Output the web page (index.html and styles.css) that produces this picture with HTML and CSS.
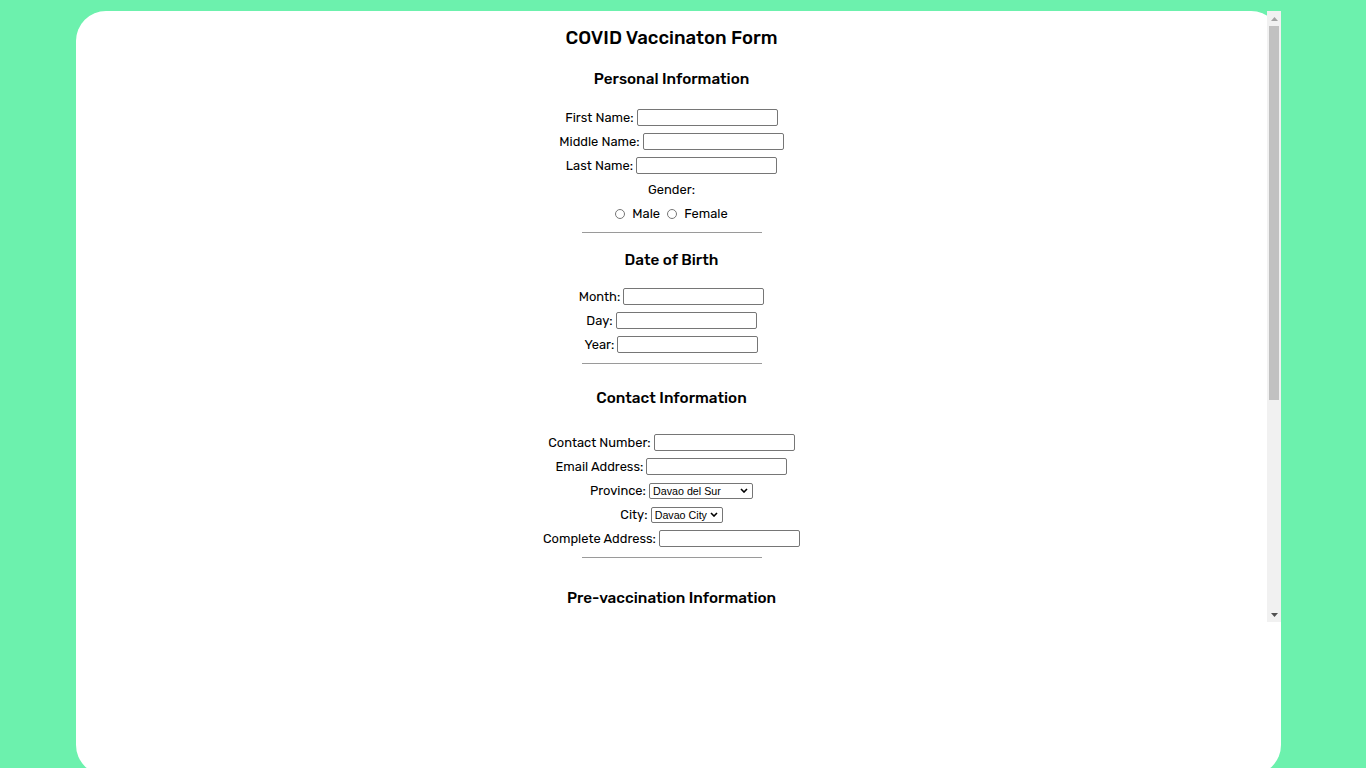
FILE: index.html
```html
<!DOCTYPE html>
<html lang="en">
<head>
<meta charset="utf-8">
<title>COVID Vaccinaton Form</title>
<link rel="stylesheet" href="styles.css">
</head>
<body>
<div class="card">
  <div class="viewport">
    <div class="scroller">
      <form class="form">
        <h1 class="title">COVID Vaccinaton Form</h1>

        <h2 class="section-title sec-personal">Personal Information</h2>
        <div class="row"><label>First Name:</label> <input type="text" class="field"></div>
        <div class="row"><label>Middle Name:</label> <input type="text" class="field"></div>
        <div class="row"><label>Last Name:</label> <input type="text" class="field"></div>
        <div class="row"><label>Gender:</label></div>
        <div class="row radios">
          <input type="radio" name="gender" class="radio"><span>Male</span>
          <input type="radio" name="gender" class="radio"><span>Female</span>
        </div>
        <hr class="divider">

        <h2 class="section-title sec-birth">Date of Birth</h2>
        <div class="row"><label>Month:</label> <input type="text" class="field"></div>
        <div class="row"><label>Day:</label> <input type="text" class="field"></div>
        <div class="row"><label>Year:</label> <input type="text" class="field"></div>
        <hr class="divider">

        <h2 class="section-title sec-contact">Contact Information</h2>
        <div class="row"><label>Contact Number:</label> <input type="text" class="field"></div>
        <div class="row"><label>Email Address:</label> <input type="text" class="field"></div>
        <div class="row"><label>Province:</label> <select class="select select-province"><option>Davao del Sur</option><option>Davao del Norte</option></select></div>
        <div class="row"><label>City:</label> <select class="select select-city"><option>Davao City</option><option>Digos City</option></select></div>
        <div class="row"><label>Complete Address:</label> <input type="text" class="field"></div>
        <hr class="divider">

        <h2 class="section-title sec-pre">Pre-vaccination Information</h2>
      </form>
    </div>
    <div class="scrollbar" aria-hidden="true">
      <div class="sb-button">
        <svg width="7" height="4" viewBox="0 0 7 4"><path d="M0 4 L3.5 0 L7 4 Z" fill="#a3a3a3"/></svg>
      </div>
      <div class="sb-track">
        <div class="sb-thumb"></div>
      </div>
      <div class="sb-button">
        <svg width="7" height="4" viewBox="0 0 7 4"><path d="M0 0 L7 0 L3.5 4 Z" fill="#505050"/></svg>
      </div>
    </div>
  </div>
</div>
</body>
</html>
```
FILE: styles.css
```css
html, body {
  margin: 0;
  padding: 0;
}
body {
  background: #6cf1ad;
  height: 768px;
  overflow: hidden;
  font-family: "Rubik", "Noto Sans", "Liberation Sans", sans-serif;
  color: #000;
}
.card {
  margin: 11px 0 0 76px;
  width: 1205px;
  height: 764px;
  background: #fff;
  border-radius: 30px;
}
.viewport {
  display: flex;
  height: 611px;
}
.scroller {
  flex: 1;
  overflow: hidden;
}
.form {
  text-align: center;
}
.title {
  font-size: 18.6px;
  font-weight: 500;
  line-height: 24px;
  margin: 15px 0 0;
}
.section-title {
  font-size: 15.3px;
  font-weight: 500;
  line-height: 22px;
  margin: 0;
}
.sec-personal { margin-top: 18px; margin-bottom: 15px; }
.sec-birth { margin-top: 16px; margin-bottom: 13px; }
.sec-contact { margin-top: 23px; margin-bottom: 21px; }
.sec-pre { margin-top: 29px; }
.row {
  font-size: 12.9px;
  line-height: 24px;
  height: 24px;
  white-space: nowrap;
}
.row label,
.radios span {
  vertical-align: middle;
}
.field {
  box-sizing: border-box;
  width: 141px;
  height: 17px;
  margin: 0;
  padding: 0 2px;
  border: 1px solid #767676;
  border-radius: 2px;
  font: 11px "Liberation Sans", sans-serif;
  vertical-align: middle;
}
.select {
  -webkit-appearance: none;
  appearance: none;
  box-sizing: border-box;
  height: 16px;
  margin: 0;
  padding: 0 0 0 3px;
  border: 1px solid #767676;
  border-radius: 2px;
  font: 10.7px/14px "Liberation Sans", sans-serif;
  color: #000;
  vertical-align: middle;
  background: #fff url("data:image/svg+xml,%3Csvg xmlns='http://www.w3.org/2000/svg' width='8' height='5' viewBox='0 0 8 5'%3E%3Cpath d='M1 1 L4 4 L7 1' fill='none' stroke='%23000' stroke-width='1.6'/%3E%3C/svg%3E") no-repeat right 4px center;
}
.select-province { width: 104px; }
.select-city { width: 72px; }
.radio {
  width: 10px;
  height: 10px;
  margin: 0 7px 0 4px;
  vertical-align: middle;
}
.radio:first-child {
  margin-left: 0;
}
.divider {
  width: 180px;
  margin: 7px auto 0;
  border: 0;
  border-top: 1px solid #9a9a9a;
  height: 0;
}
.scrollbar {
  width: 14px;
  background: #f1f1f1;
  display: flex;
  flex-direction: column;
}
.sb-button {
  height: 15px;
  display: flex;
  align-items: center;
  justify-content: center;
}
.sb-track {
  flex: 1;
  display: flex;
  flex-direction: column;
}
.sb-thumb {
  height: 374px;
  margin: 0 2px;
  background: #c1c1c1;
}
```
